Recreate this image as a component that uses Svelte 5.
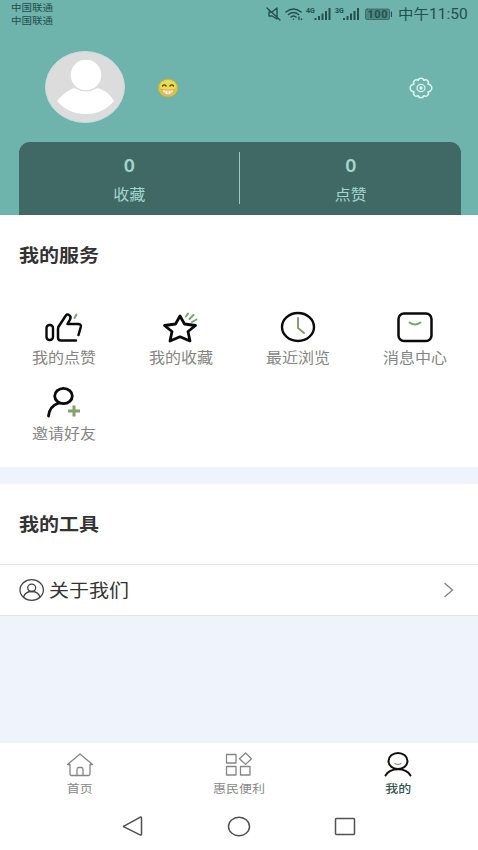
<script>
  let active = "mine";

  const stats = [
    { label: "收藏", count: 0 },
    { label: "点赞", count: 0 }
  ];

  const services = [
    { icon: "like", label: "我的点赞" },
    { icon: "star", label: "我的收藏" },
    { icon: "clock", label: "最近浏览" },
    { icon: "message", label: "消息中心" },
    { icon: "invite", label: "邀请好友" }
  ];

  const tabs = [
    { id: "home", label: "首页" },
    { id: "life", label: "惠民便利" },
    { id: "mine", label: "我的" }
  ];
</script>

<style>
  :global(body) {
    margin: 0;
    background: #eff3fb;
  }
  .page {
    display: flex;
    flex-direction: column;
    width: 478px;
    height: 850px;
    overflow: hidden;
    background: #eff3fb;
    color: #333;
    font-family: "Noto Sans CJK SC", "Noto Sans", sans-serif;
  }
  svg {
    display: block;
    fill: none;
    stroke-linecap: round;
    stroke-linejoin: round;
  }
  .t {
    display: block;
    transform: scaleY(0.9);
    white-space: nowrap;
  }
  header {
    box-sizing: border-box;
    height: 215px;
    background: #6eb3ac;
  }
  .status {
    display: flex;
    justify-content: space-between;
    height: 28px;
    padding: 0 10px 0 11px;
    color: #24504c;
  }
  .carrier {
    padding-top: 1px;
    font-size: 10.5px;
    line-height: 12.5px;
  }
  .signals {
    display: flex;
    align-items: center;
  }
  .time {
    width: 70px;
    margin-left: 6px;
    font-family: Roboto, "Noto Sans CJK SC", sans-serif;
    font-size: 15.5px;
    line-height: 28px;
  }
  .profile {
    display: flex;
    align-items: center;
    height: 70px;
    padding: 24px 45px 0;
  }
  .emoji {
    margin: 2px 0 0 32px;
  }
  .gear {
    margin: 2px 0 0 auto;
  }
  .stats {
    display: flex;
    height: 73px;
    margin: 20px 17px 0 19px;
    border-radius: 11px 11px 0 0;
    background: #406965;
    color: #a3d5cd;
    text-align: center;
  }
  .stat {
    flex: 1;
    padding-top: 12px;
    font-size: 16px;
    line-height: 24px;
  }
  .count {
    margin-bottom: 4px;
    font-family: "Noto Sans", sans-serif;
    font-size: 19.5px;
    font-weight: 600;
  }
  .line {
    width: 1px;
    height: 52px;
    margin: 10px 1px 0 -1px;
    background: #9ccac3;
  }
  .services {
    height: 252px;
    background: #fff;
  }
  h2 {
    margin: 0;
    padding: 0 19px;
    font-size: 20px;
    font-weight: 700;
    line-height: 80px;
  }
  .grid {
    display: grid;
    grid-template-columns: repeat(4, 117px);
    grid-auto-rows: 76px;
    justify-content: center;
    padding: 12px 0 0 1px;
  }
  .item {
    display: flex;
    flex-direction: column;
    align-items: center;
    color: #858585;
    font-size: 16px;
    line-height: 24px;
  }
  .item svg {
    margin-bottom: -2px;
    stroke: #0a0a0a;
    stroke-width: 2.8;
  }
  .item svg .accent {
    stroke: #82a06b;
    stroke-width: 2;
  }
  .item svg .plus {
    stroke-width: 3;
    stroke-linecap: butt;
  }
  .tools {
    margin-top: 17px;
    background: #fff;
  }
  .row {
    display: flex;
    align-items: center;
    height: 50px;
    padding: 0 24px 0 19px;
    border-top: 1px solid #e5e6e8;
    border-bottom: 1px solid #e2e4e8;
    font-size: 20px;
  }
  .row .t {
    flex: 1;
    margin: -2px 0 0 4px;
  }
  .tabs {
    display: flex;
    height: 57px;
    margin-top: auto;
    background: #fff;
  }
  .tab {
    display: flex;
    flex: 1;
    flex-direction: column;
    align-items: center;
    padding-top: 7px;
    color: #888;
    font-size: 13px;
    line-height: 18px;
  }
  .tab svg {
    stroke: #858585;
    stroke-width: 1.3;
  }
  .tab.active {
    color: #385650;
    font-weight: 500;
  }
  .tab.active svg {
    stroke: #111;
    stroke-width: 2;
  }
  .tab.active svg .smile {
    stroke: #82a06b;
    stroke-width: 1.3;
  }
  .keys {
    display: flex;
    justify-content: center;
    gap: 82px;
    box-sizing: border-box;
    height: 50px;
    padding-top: 14px;
    background: #fff;
    stroke: #505050;
    stroke-width: 1.5;
  }
</style>

<div class="page">
  <header>
    <div class="status">
      <div class="carrier">
        <span class="t">中国联通</span>
        <span class="t">中国联通</span>
      </div>
      <div class="signals">
        <svg width="126" height="28" viewBox="266 0 126 28" stroke="currentColor">
          <path d="M269 12h3l5-4v11l-5-3h-3zM267 8l13 12" stroke-width="1.4" />
          <path d="M286 12q7.500-6 15 0M288.500 14.500q5-4 10 0M291 17q2.500-2 5 0" stroke-width="1.6" />
          <path d="M293.500 19.300v.1M299 17v2.500M301.500 19v.5" stroke-width="1.4" />
          <g fill="currentColor" stroke="none" font-family="Roboto, sans-serif" font-weight="700" font-size="7">
            <text x="306" y="13">4G</text>
            <text x="335" y="13">3G</text>
          </g>
          <g stroke-width="2" stroke-linecap="butt">
            <path d="M315.500 20v-2M319 20v-4M322.500 20v-6.500M326 20v-9M329.500 20v-12" />
            <path d="M344 20v-2M347.500 20v-4M351 20v-6.500M354.500 20v-9M358 20v-12" />
          </g>
          <rect x="365.500" y="9" width="24" height="10.500" rx="1.500" fill="#4d8983" stroke-width=".6" />
          <path d="M391.500 12v4.500" stroke-width="1.200" />
          <text x="367.500" y="18.300" fill="currentColor" stroke="none" font-family="Roboto, sans-serif" font-weight="700" font-size="11" textLength="20">100</text>
        </svg>
        <span class="t time">中午11:50</span>
      </div>
    </div>

    <div class="profile">
      <svg width="80" height="72" viewBox="0 0 80 72">
        <ellipse cx="40" cy="36" rx="39.500" ry="35.500" fill="#dcdcdc" stroke="#c2e1dc" />
        <path d="M12 50Q19 41 28 37.500Q30 37 32 38.200Q41 43 50 38.200Q52 37 54 37.500Q64 41 69 50Q58 63 41 63Q23 63 12 50z" fill="#fff" />
        <circle cx="41" cy="24" r="15.300" fill="#fff" />
      </svg>
      <svg class="emoji" width="22" height="20" viewBox="0 0 22 20">
        <ellipse cx="11" cy="10" rx="10" ry="9" fill="#d7c744" stroke="#a8b65e" />
        <ellipse cx="11" cy="8" rx="8" ry="6" fill="#ecdc55" />
        <path d="M5 11.500Q11 13 17 11.500Q16 17 11 17Q6 17 5 11.500z" fill="#fff1cf" stroke="#d79a4e" stroke-width=".8" />
        <path d="M11 12.500v4M8 12.500v3.500M14 12.500v3.500" stroke="#d5a878" stroke-width=".6" />
        <path d="M5.500 8q1.800-2.300 3.600 0M12.900 8q1.800-2.300 3.600 0" stroke="#57471c" stroke-width="1.300" />
      </svg>
      <svg class="gear" width="24" height="22" viewBox="0 0 24 22" stroke="#e0f5f1" stroke-width="1.500">
        <path d="M9.200 3.300Q9.500 1.300 12 1.300T14.800 3.300Q16.800 2 18.500 3.500T19 7Q22.800 7.800 22.800 11T19 15Q20.200 17 18.500 18.500T14.800 18.700Q14.500 20.700 12 20.700T9.200 18.700Q7.200 20 5.500 18.500T5 15Q1.200 14.200 1.200 11T5 7Q3.800 5 5.500 3.500T9.200 3.300z" />
        <ellipse cx="12" cy="11" rx="4" ry="3.600" stroke-width="1.200" />
        <circle cx="12" cy="11" r="1.700" fill="#e0f5f1" stroke="none" />
      </svg>
    </div>

    <div class="stats">
      {#each stats as s, i}
        {#if i > 0}
          <div class="line"></div>
        {/if}
        <div class="stat">
          <span class="t count">{s.count}</span>
          <span class="t">{s.label}</span>
        </div>
      {/each}
    </div>
  </header>

  <section class="services">
    <h2><span class="t">我的服务</span></h2>
    <div class="grid">
      {#each services as s}
        <div class="item">
          <svg width="44" height="40" viewBox="0 0 44 40">
            {#if s.icon === "like"}
              <rect x="4.500" y="18" width="6.500" height="15" rx="3" stroke-width="2.4" />
              <path d="M34 33.500H19Q16 33.500 16 30.500V22Q16 19.500 18 17.500L23.500 9Q25 6.500 27 8Q29.500 9.500 28 12.500L25.500 17H36Q39.500 17 38.800 20L36.500 28" stroke-width="2.5" />
              <path class="accent" d="M32.500 11L34.500 7.500" />
            {:else if s.icon === "star"}
              <path d="M21 9L25.500 17L36.500 18.500L29 24.500L31 34L21 29.800L11 34L13 24.500L5.500 18.500L16.500 17z" />
              <path class="accent" d="M27 9.500L29 6.500M30.500 12L34.500 8M33 15L37.500 12.500" />
            {:else if s.icon === "clock"}
              <ellipse cx="22" cy="20" rx="16" ry="14" stroke-width="2.4" />
              <path class="accent" d="M22 11v10l6 5" />
            {:else if s.icon === "message"}
              <rect x="5.500" y="6.500" width="33" height="27.500" rx="5.500" stroke-width="2.5" />
              <path class="accent" d="M16.500 15.500q5.500 4 11 0" />
            {:else}
              <ellipse cx="21.500" cy="13" rx="8.800" ry="7.600" />
              <path d="M17 20Q7.500 23 6.500 33" />
              <path class="accent plus" d="M32 22.500v11M26 28h12" />
            {/if}
          </svg>
          <span class="t">{s.label}</span>
        </div>
      {/each}
    </div>
  </section>

  <section class="tools">
    <h2><span class="t">我的工具</span></h2>
    <div class="row">
      <svg width="26" height="24" viewBox="0 0 26 24" stroke="#444" stroke-width="1.300">
        <ellipse cx="12.700" cy="12" rx="11.700" ry="10.300" />
        <ellipse cx="12.700" cy="9.800" rx="4" ry="3.700" />
        <path d="M4.500 19Q6.500 13.500 12.700 13.500Q19 13.500 21 19" />
      </svg>
      <span class="t">关于我们</span>
      <svg width="11" height="16" viewBox="0 0 11 16" stroke="#858585" stroke-width="1.500">
        <path d="M2 1.500l7.500 6.500L2 14.500" />
      </svg>
    </div>
  </section>

  <nav class="tabs">
    {#each tabs as tab}
      <!-- svelte-ignore a11y_click_events_have_key_events -->
      <!-- svelte-ignore a11y_no_static_element_interactions -->
      <div class="tab" class:active={tab.id === active} on:click={() => (active = tab.id)}>
        <svg width="30" height="29" viewBox="0 0 30 29">
          {#if tab.id === "home"}
            <path d="M5 14.500H2.500L15 4L27.500 14.500H25V24Q25 25.500 23.500 25.500H6.500Q5 25.500 5 24z" />
            <path d="M12 25.500V19.500q0-2 1.500-2h3Q18 17.500 18 19.500v6" />
          {:else if tab.id === "life"}
            <path d="M2.500 4.500h9.500v8.500H2.500zM2.500 16.500h9.500V25H2.500zM16.500 16.500H26V25h-9.500zM21.500 3l6 5.700l-6 5.700l-6-5.700z" />
          {:else}
            <ellipse cx="15" cy="11" rx="9.500" ry="8" />
            <path d="M2.500 25.500Q6 19.300 15 19.300Q24 19.300 27.500 25.500" />
            <path class="smile" d="M12 13.500q3 2 6 0" />
          {/if}
        </svg>
        <span class="t">{tab.label}</span>
      </div>
    {/each}
  </nav>

  <div class="keys">
    <svg width="24" height="24" viewBox="0 0 24 24">
      <path d="M2.500 12.300L19 3.300Q20.500 2.700 20.500 4V20Q20.500 21.500 19 20.800L3 12.800Q2 12.500 3 12z" />
    </svg>
    <svg width="24" height="24" viewBox="0 0 24 24">
      <ellipse cx="12" cy="12.500" rx="10.500" ry="9.200" />
    </svg>
    <svg width="24" height="24" viewBox="0 0 24 24">
      <rect x="2.500" y="4.500" width="19" height="16" rx="1" />
    </svg>
  </div>
</div>
